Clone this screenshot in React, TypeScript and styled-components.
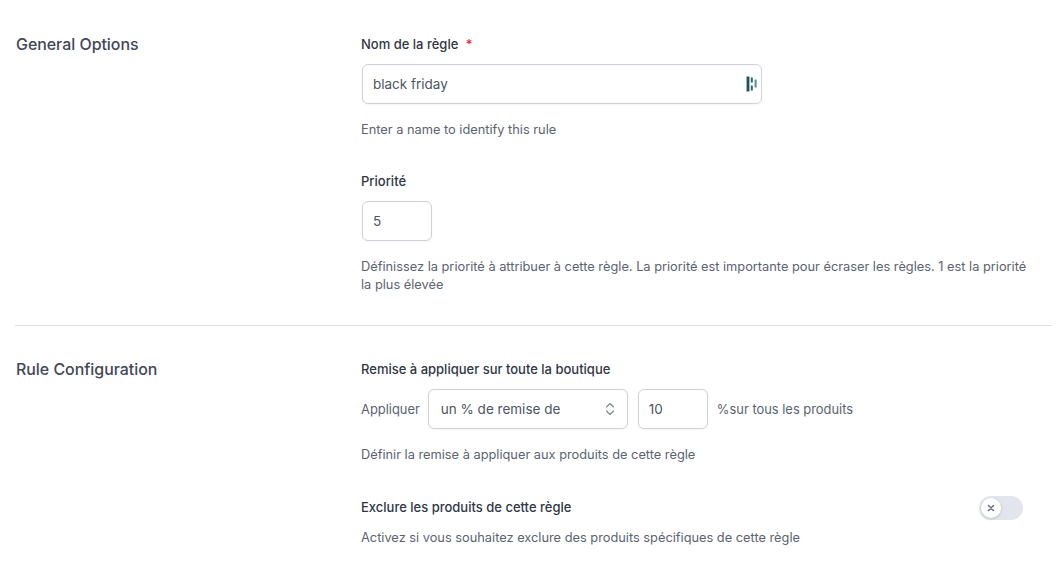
import styled, { createGlobalStyle } from "styled-components";

const GlobalStyle = createGlobalStyle`
  html, body {
    margin: 0;
    padding: 0;
    background: #ffffff;
    font-family: Inter, "Liberation Sans", sans-serif;
  }
`;

const App = () => {
  return (
    <>
      <GlobalStyle />
      <Page>
        <Section>
          <SectionTitle>General Options</SectionTitle>
          <Fields>
            <Label>
              Nom de la règle <Required>*</Required>
            </Label>
            <InputBox $width={400} $top={12}>
              <InputText>black friday</InputText>
              <InputLogo width="14" height="16" viewBox="0 0 14 16">
                <rect x="1.6" y="0.5" width="2.8" height="15" fill="#1f4f5c" />
                <rect x="5.8" y="1.5" width="2" height="5" fill="#2d6270" />
                <rect x="5.8" y="9.5" width="2" height="5" fill="#2d6270" />
                <rect x="9.6" y="3.5" width="2" height="8" fill="#4f8f9c" />
              </InputLogo>
            </InputBox>
            <Help $top={17}>Enter a name to identify this rule</Help>

            <Label $top={34}>Priorité</Label>
            <InputBox $width={70} $top={12}>
              <InputText>5</InputText>
            </InputBox>
            <Help $top={17}>
              Définissez la priorité à attribuer à cette règle. La priorité est
              importante pour écraser les règles. 1 est la priorité la plus
              élevée
            </Help>
          </Fields>
        </Section>

        <Divider />

        <Section>
          <SectionTitle>Rule Configuration</SectionTitle>
          <Fields>
            <Label>Remise à appliquer sur toute la boutique</Label>
            <DiscountRow>
              <RowText>Appliquer</RowText>
              <SelectBox>
                <SelectText>un % de remise de</SelectText>
                <svg width="12" height="16" viewBox="0 0 12 16" fill="none" stroke="#7b8494" strokeWidth="1.1" strokeLinecap="round" strokeLinejoin="round">
                  <path d="M2.5 6 6 2.5 9.5 6" />
                  <path d="M2.5 10 6 13.5 9.5 10" />
                </svg>
              </SelectBox>
              <InputBox $width={70} $top={0}>
                <InputText>10</InputText>
              </InputBox>
              <RowText>%sur tous les produits</RowText>
            </DiscountRow>
            <Help $top={17}>Définir la remise à appliquer aux produits de cette règle</Help>

            <ToggleRow>
              <ToggleLabel>Exclure les produits de cette règle</ToggleLabel>
              <Toggle>
                <Knob>
                  <svg width="8" height="8" viewBox="0 0 8 8" stroke="#6b7280" strokeWidth="1.6" strokeLinecap="round">
                    <path d="M1.5 1.5 6.5 6.5M6.5 1.5 1.5 6.5" />
                  </svg>
                </Knob>
              </Toggle>
            </ToggleRow>
            <Help $top={9}>Activez si vous souhaitez exclure des produits spécifiques de cette règle</Help>
          </Fields>
        </Section>
      </Page>
    </>
  );
};

const Page = styled.div`
  width: 1059px;
  height: 567px;
  box-sizing: border-box;
  overflow: hidden;
  padding: 36px 7px 0 15px;
`;

const Section = styled.section`
  display: grid;
  grid-template-columns: 346px 1fr;
`;

const SectionTitle = styled.h2`
  margin: 0;
  padding-left: 1px;
  font-size: 15.9px;
  line-height: 17px;
  font-weight: 500;
  color: #3f4756;
`;

const Fields = styled.div`
  display: flex;
  flex-direction: column;
  align-items: flex-start;
`;

const Label = styled.div<{ $top?: number }>`
  margin-top: ${(p) => p.$top ?? 0}px;
  font-size: 13px;
  line-height: 16px;
  font-weight: 500;
  color: #2f3644;
`;

const ToggleLabel = styled(Label)`
  margin-bottom: 2px;
`;

const Required = styled.span`
  margin-left: 4px;
  color: #d92d3f;
`;

const InputBox = styled.div<{ $width: number; $top: number }>`
  width: ${(p) => p.$width}px;
  height: 40px;
  margin-top: ${(p) => p.$top}px;
  margin-left: 1px;
  box-sizing: border-box;
  display: flex;
  align-items: center;
  justify-content: space-between;
  padding: 0 2px 0 10px;
  border: 1px solid #cdd2d9;
  border-radius: 6px;
  box-shadow: 0 1px 2px rgba(31, 41, 55, 0.05);
`;

const InputText = styled.span`
  font-size: 13.5px;
  color: #4b5563;
`;

const InputLogo = styled.svg`
  display: block;
`;

const Help = styled.p<{ $top: number }>`
  margin: ${(p) => p.$top}px 0 0;
  max-width: 672px;
  font-size: 12.8px;
  line-height: 18px;
  color: #5b6370;
`;

const Divider = styled.hr`
  margin: 31px 0 35px;
  border: 0;
  border-top: 1px solid #dfe1e5;
`;

const DiscountRow = styled.div`
  display: flex;
  align-items: center;
  margin-top: 12px;

  > :nth-child(3) {
    margin-left: 10px;
  }

  > :nth-child(4) {
    margin-left: 9px;
  }
`;

const RowText = styled.span`
  font-size: 12.9px;
  color: #5b6370;
`;

const SelectBox = styled.div`
  width: 200px;
  height: 40px;
  margin-left: 8px;
  box-sizing: border-box;
  display: flex;
  align-items: center;
  justify-content: space-between;
  padding: 0 11px 0 12px;
  border: 1px solid #cdd2d9;
  border-radius: 6px;
  box-shadow: 0 1px 2px rgba(31, 41, 55, 0.05);
`;

const SelectText = styled.span`
  font-size: 13.5px;
  color: #4b5563;
`;

const ToggleRow = styled.div`
  width: 662px;
  margin-top: 32px;
  display: flex;
  align-items: center;
  justify-content: space-between;
`;

const Toggle = styled.div`
  width: 44px;
  height: 24px;
  border-radius: 12px;
  background: #e2e6ec;
  display: flex;
  align-items: center;
`;

const Knob = styled.div`
  width: 20px;
  height: 20px;
  margin-left: 2px;
  border-radius: 50%;
  background: #ffffff;
  box-shadow: 0 1px 3px rgba(31, 41, 55, 0.2);
  display: flex;
  align-items: center;
  justify-content: center;
`;

export default App;
